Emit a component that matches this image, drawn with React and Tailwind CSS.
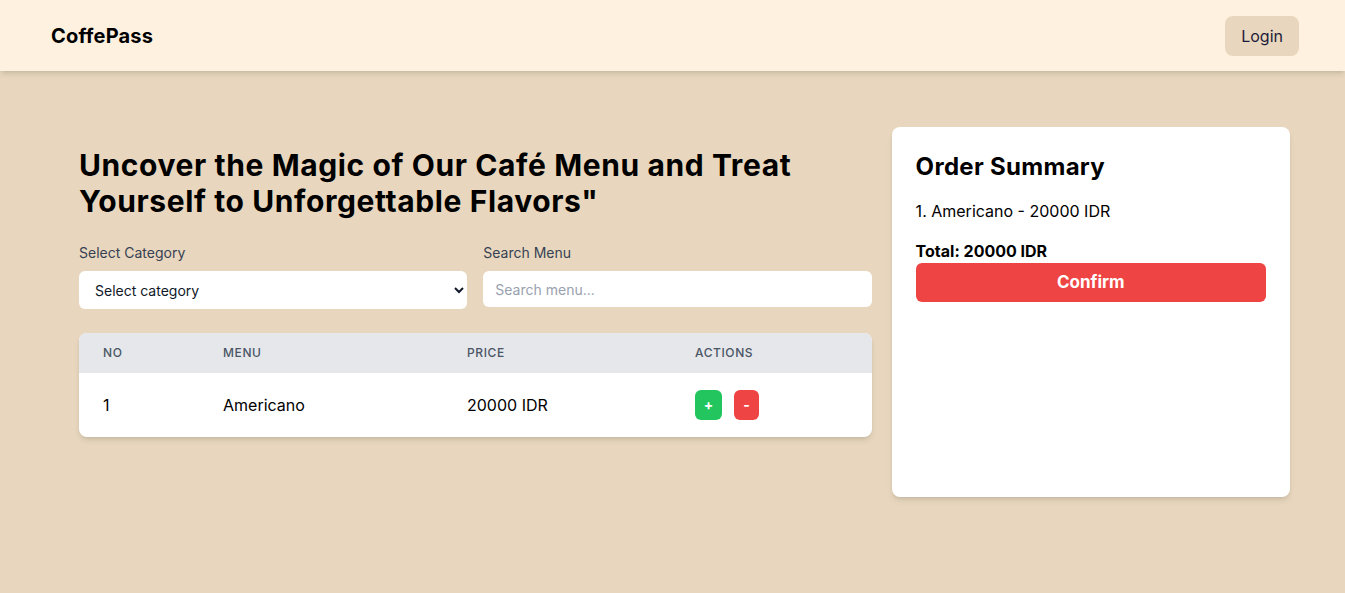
import { useState } from 'react';

const menus = [{ id: 1, name: 'Americano', price: 20000 }];

export default function App() {
    const [order] = useState([{ name: 'Americano', price: 20000 }]);
    const total = order.reduce((sum, item) => sum + item.price, 0);

    return (
        <div className="min-h-screen bg-[#e8d7be] text-black" style={{ fontFamily: 'Inter, "Noto Sans", sans-serif' }}>
            {/* Navbar */}
            <nav className="h-[71px] bg-[#fff1e0] shadow-md flex items-center justify-between pl-[51px] pr-[46px]">
                <span className="text-xl font-bold tracking-[0.2px]">CoffePass</span>
                <button className="h-10 px-4 rounded-lg bg-[#e8d7be] text-base text-[#1e1b3a]">Login</button>
            </nav>

            <main className="flex gap-5 px-[55px] pt-14 pb-10">
                {/* Menu section */}
                <div className="w-[818px] pl-6 pt-5">
                    <h1 className="text-3xl font-bold leading-9 tracking-[0.6px] mb-6">
                        Uncover the Magic of Our Café Menu and Treat Yourself to Unforgettable Flavors"
                    </h1>

                    <div className="flex gap-4">
                        <div className="flex-1">
                            <label className="block text-sm text-gray-700 mb-2">Select Category</label>
                            <select className="w-full h-[38px] rounded-md bg-white px-3 text-sm text-gray-900 outline-none">
                                <option>Select category</option>
                            </select>
                        </div>
                        <div className="flex-1">
                            <label className="block text-sm text-gray-700 mb-2">Search Menu</label>
                            <input
                                type="text"
                                placeholder="Search menu..."
                                className="w-full h-9 rounded-md bg-white px-3 text-sm placeholder-gray-400 outline-none"
                            />
                        </div>
                    </div>

                    {/* Menu table */}
                    <div className="mt-6 bg-white rounded-lg shadow-md overflow-hidden">
                        <table className="w-full text-left">
                            <thead className="bg-[#e5e7eb]">
                                <tr className="h-10 text-xs uppercase tracking-wider text-gray-600 font-medium">
                                    <th className="w-[120px] px-6 font-medium">No</th>
                                    <th className="w-[244px] px-6 font-medium">Menu</th>
                                    <th className="w-[228px] px-6 font-medium">Price</th>
                                    <th className="px-6 font-medium">Actions</th>
                                </tr>
                            </thead>
                            <tbody>
                                {menus.map((menu, index) => (
                                    <tr key={menu.id} className="h-16 text-base">
                                        <td className="px-6">{index + 1}</td>
                                        <td className="px-6">{menu.name}</td>
                                        <td className="px-6">{menu.price} IDR</td>
                                        <td className="px-6">
                                            <div className="flex gap-3 items-center">
                                                <button className="w-[27px] h-[30px] rounded-md bg-[#22c55e] text-white text-sm font-bold">+</button>
                                                <button className="w-[25px] h-[30px] rounded-md bg-[#ef4444] text-white text-sm font-bold">-</button>
                                            </div>
                                        </td>
                                    </tr>
                                ))}
                            </tbody>
                        </table>
                    </div>
                </div>

                {/* Order summary */}
                <div className="w-[399px] h-[370px] bg-white rounded-lg shadow-md p-6">
                    <h2 className="text-2xl font-bold tracking-[0.3px] mb-4">Order Summary</h2>
                    {order.map((item, index) => (
                        <p key={index} className="text-base">
                            {index + 1}. {item.name} - {item.price} IDR
                        </p>
                    ))}
                    <p className="mt-4 font-bold text-base">Total: {total} IDR</p>
                    <button className="w-full h-[39px] rounded-md bg-[#ef4444] text-white font-bold text-[17px]">Confirm</button>
                </div>
            </main>
        </div>
    );
}
